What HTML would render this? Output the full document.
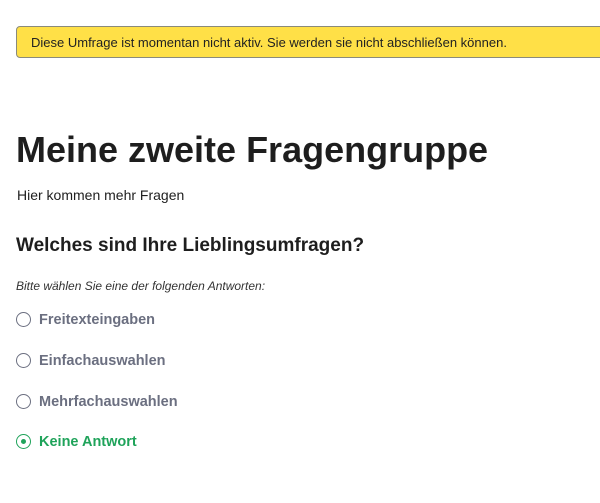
<html><head><style>
body{margin:0;width:600px;height:503px;background:#fff;font-family:"Liberation Sans",sans-serif;color:#1e1e1e;position:relative;overflow:hidden}
.b{position:absolute;left:16px;top:26px;width:600px;height:32px;background:#ffe047;border:1px solid #8a8a7a;border-radius:4px;box-sizing:border-box}
.b span{position:absolute;left:14px;top:8px;font-size:13px;color:#222}
.t{position:absolute;white-space:nowrap}
.o{position:absolute;left:16px;width:15px;height:15px;border:1.5px solid #6b6f80;border-radius:50%;box-sizing:border-box}
.l{position:absolute;left:39px;font-size:14.5px;font-weight:bold;color:#6b6f80}
</style></head><body>
<div class="b"><span>Diese Umfrage ist momentan nicht aktiv. Sie werden sie nicht abschließen können.</span></div>
<div class="t" style="left:16px;top:129px;font-size:36px;font-weight:bold">Meine zweite Fragengruppe</div>
<div class="t" style="left:17px;top:187px;font-size:14px">Hier kommen mehr Fragen</div>
<div class="t" style="left:16px;top:235px;font-size:19px;font-weight:bold">Welches sind Ihre Lieblingsumfragen?</div>
<div class="t" style="left:16px;top:279px;font-size:12px;font-style:italic;color:#333">Bitte wählen Sie eine der folgenden Antworten:</div>
<div class="o" style="top:312px"></div><div class="t l" style="top:312px">Freitexteingaben</div>
<div class="o" style="top:353px"></div><div class="t l" style="top:353px">Einfachauswahlen</div>
<div class="o" style="top:394px"></div><div class="t l" style="top:394px">Mehrfachauswahlen</div>
<div class="o" style="top:434px;border-color:#1fa35a"><div style="position:absolute;left:3.5px;top:3.5px;width:5px;height:5px;border-radius:50%;background:#1fa35a"></div></div><div class="t l" style="top:434px;color:#1fa35a">Keine Antwort</div>
</body></html>
